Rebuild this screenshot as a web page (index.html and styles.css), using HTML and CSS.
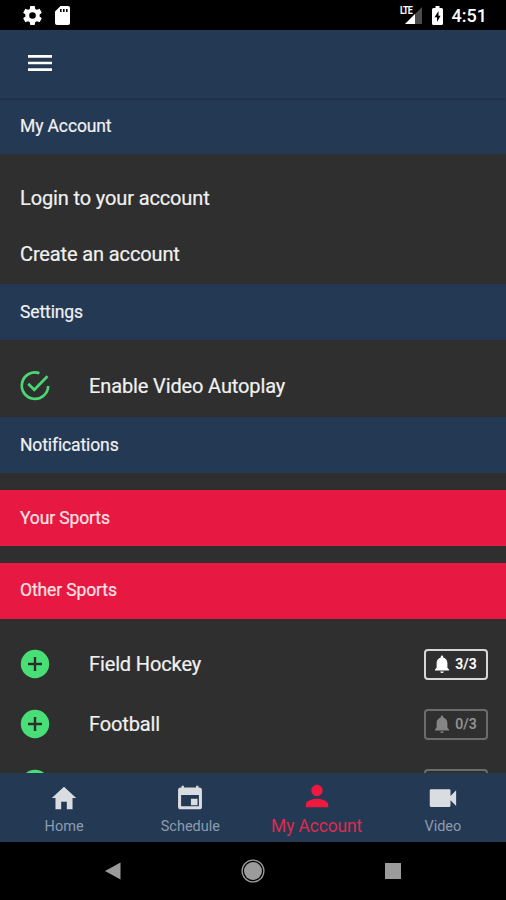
FILE: index.html
```html
<!DOCTYPE html>
<html lang="en">
<head>
    <meta charset="utf-8">
    <title>My Account</title>
    <link rel="stylesheet" href="styles.css">
</head>
<body>
    <!-- shared icons -->
    <svg class="sprite">
        <symbol id="plus" viewBox="0 0 30 30">
            <circle cx="15" cy="15" r="14.2" fill="#49df77"/>
            <path d="M8 15h14M15 8v14" stroke="#2c302d" stroke-width="2.4"/>
        </symbol>
        <symbol id="bell" viewBox="0 0 14 18">
            <path d="M7 18a1.8 1.8 0 0 0 1.8-1.6H5.2A1.8 1.8 0 0 0 7 18zm5.400-5.300V8c0-2.800-1.700-4.800-4.200-5.400V1.600a1.200 1.200 0 0 0-2.400 0v1C3.300 3.200 1.600 5.200 1.600 8v4.700L0 14.400v1h14v-1z"/>
        </symbol>
    </svg>

    <div class="status-bar">
        <svg class="gear" viewBox="2 2 20 20"><path d="M19.430 12.980c.04-.32.07-.64.07-.98s-.03-.66-.07-.98l2.110-1.650c.19-.15.24-.42.12-.64l-2-3.460c-.12-.22-.39-.3-.61-.22l-2.490 1c-.52-.4-1.080-.73-1.690-.98l-.38-2.650C14.460 2.180 14.250 2 14 2h-4c-.25 0-.46.18-.49.42l-.38 2.650c-.61.25-1.170.59-1.690.98l-2.490-1c-.23-.09-.49 0-.61.22l-2 3.460c-.13.22-.07.49.12.64l2.110 1.650c-.04.32-.07.65-.07.98s.03.66.07.98l-2.110 1.650c-.19.15-.24.42-.12.64l2 3.460c.12.22.39.3.61.22l2.490-1c.52.4 1.080.73 1.690.98l.38 2.650c.03.24.24.42.49.42h4c.25 0 .46-.18.49-.42l.38-2.650c.61-.25 1.170-.59 1.690-.98l2.490 1c.23.09.49 0 .61-.22l2-3.460c.12-.22.07-.49-.12-.64zM12 15.500A3.500 3.500 0 1 1 12 8.500a3.500 3.500 0 0 1 0 7z"/></svg>
        <svg class="sdcard" viewBox="0 0 15 19"><path fill-rule="evenodd" d="M5.500 0H13a2 2 0 0 1 2 2v15a2 2 0 0 1-2 2H2a2 2 0 0 1-2-2V5.500zM5 3v3h1.600V3zm3 0v3h1.600V3zm3 0v3h1.600V3z"/></svg>
        <span class="lte">LTE</span>
        <svg class="signal" viewBox="0 0 17 17"><path d="M17 0v17H0z" fill="#4b4b4b"/><path d="M10 7v10H0z"/></svg>
        <svg class="battery" viewBox="0 0 11 19"><path fill-rule="evenodd" d="M3.500 0h4v2H9.500A1.500 1.500 0 0 1 11 3.500v14A1.500 1.500 0 0 1 9.500 19h-8A1.500 1.500 0 0 1 0 17.500v-14A1.500 1.500 0 0 1 1.500 2h2zM6.500 5L2.500 11.200H5V16l3.600-6.300H6.500z"/></svg>
        <span class="clock">4:51</span>
    </div>

    <div class="toolbar">
        <svg class="menu" viewBox="0 0 24 16"><path d="M0 0h24v2.700H0zM0 6.650h24v2.700H0zM0 13.300h24V16H0z"/></svg>
    </div>

    <div class="content">
        <div class="header">My Account</div>
        <div class="links">
            <div class="link">Login to your account</div>
            <div class="link">Create an account</div>
        </div>
        <div class="header">Settings</div>
        <div class="row setting">
            <svg class="row-icon" viewBox="0 0 30 30" fill="none" stroke="#49d873" stroke-width="2.700">
                <path d="M19.400 2.200A13.200 13.200 0 1 0 28.200 15"/>
                <path d="M8.200 12.800L14.300 18.800 27.500 5.300"/>
            </svg>
            <span class="name">Enable Video Autoplay</span>
        </div>
        <div class="header">Notifications</div>
        <div class="header red">Your Sports</div>
        <div class="header red">Other Sports</div>
        <div class="sports">
            <div class="row">
                <svg class="row-icon"><use href="#plus"/></svg>
                <span class="name">Field Hockey</span>
                <span class="badge on"><svg class="bell"><use href="#bell"/></svg>3/3</span>
            </div>
            <div class="row">
                <svg class="row-icon"><use href="#plus"/></svg>
                <span class="name">Football</span>
                <span class="badge"><svg class="bell"><use href="#bell"/></svg>0/3</span>
            </div>
            <div class="row">
                <svg class="row-icon"><use href="#plus"/></svg>
                <span class="name"></span>
                <span class="badge"></span>
            </div>
        </div>
    </div>

    <div class="tabs">
        <div class="tab">
            <svg viewBox="0 0 512 512"><path d="M208 448V320h96v128h97.600V256H464L256 64 48 256h62.400v192z"/></svg>
            <span>Home</span>
        </div>
        <div class="tab">
            <svg viewBox="0 0 512 512"><path fill-rule="evenodd" d="M112 48h40v30h208V48h40v30h16c26 0 44 18 44 40v290c0 22-18 40-40 40H92c-22 0-40-18-40-40V118c0-22 18-40 44-40h16zM104 206v190h304V206zM272 268h112v110H272z"/></svg>
            <span>Schedule</span>
        </div>
        <div class="tab active">
            <svg viewBox="0 0 512 512"><path d="M256 256c52.800 0 96-43.200 96-96s-43.200-96-96-96-96 43.200-96 96 43.200 96 96 96zm0 48c-63.600 0-192 32.400-192 96v48h384v-48c0-63.600-128.400-96-192-96z"/></svg>
            <span>My Account</span>
        </div>
        <div class="tab">
            <svg viewBox="0 0 512 512"><path d="M384 220v-90c0-14-8-22-22-22H52c-14 0-22 8-22 22v256c0 14 8 22 22 22h310c14 0 22-8 22-22v-90l96 96V124z"/></svg>
            <span>Video</span>
        </div>
    </div>

    <div class="nav-bar">
        <svg viewBox="0 0 24 24"><path d="M4 12L19.500 3.500v17z"/></svg>
        <svg viewBox="0 0 24 24"><circle cx="12" cy="12" r="9"/><circle cx="12" cy="12" r="10.900" fill="none" stroke="#9b9b9b" stroke-width="1.300"/></svg>
        <svg viewBox="0 0 24 24"><path d="M4 4h16v16H4z"/></svg>
    </div>
</body>
</html>
```
FILE: styles.css
```css
* { box-sizing: border-box; }
body { margin: 0; height: 900px; display: flex; flex-direction: column; overflow: hidden; background: #2f2f2f; color: #f1f1f1; font-family: Roboto, "Liberation Sans", sans-serif; }
svg { display: block; flex: none; overflow: visible; }
.sprite { display: none; }

.status-bar { height: 30px; flex: none; display: flex; align-items: center; padding: 1px 19px 0 23px; background: #000; color: #fff; fill: #fff; }
.gear { width: 19px; height: 19px; }
.sdcard { width: 15px; height: 19px; margin-left: 13px; }
.lte { width: 11px; margin-left: auto; margin-right: -6px; margin-bottom: 9px; z-index: 1; font-size: 10.5px; line-height: 10px; font-weight: bold; letter-spacing: -1px; transform: scaleX(0.85); transform-origin: left; }
.signal { width: 17px; height: 17px; }
.battery { width: 11px; height: 19px; margin-left: 10px; }
.clock { margin-left: 9px; font-size: 18px; font-weight: 500; line-height: 30px; }

.toolbar { height: 68px; flex: none; display: flex; align-items: center; padding: 0 28px 2px; background: #243954; fill: #fff; box-shadow: 0 1px 3px rgba(0,0,0,0.25); z-index: 1; }
.menu { width: 24px; height: 16px; }

.content { flex: 1; min-height: 0; overflow: hidden; -webkit-text-stroke: 0.2px; }
.header { height: 56px; padding-left: 20px; line-height: 56px; font-size: 17.5px; letter-spacing: -0.12px; background: #243954; }
.red { height: 56px; margin-top: 17px; background: #e71943; color: #ffe3e5; }
.red + .red { line-height: 55px; }
.links { padding: 16px 0 2px; }
.link { height: 56px; padding-left: 20px; line-height: 56px; font-size: 20px; letter-spacing: -0.13px; }
.row { height: 60px; display: flex; align-items: center; padding: 0 18px 0 20px; }
.setting { height: 77px; padding-top: 14px; }
.row-icon { width: 30px; height: 30px; }
.name { margin-left: 39px; font-size: 20px; letter-spacing: -0.13px; }
.sports { padding-top: 15px; }
.badge { width: 64px; height: 31px; margin-left: auto; display: flex; align-items: center; justify-content: center; gap: 6px; border: 2px solid #6c6c6c; border-radius: 4px; color: #929292; fill: #858585; font-size: 14px; font-weight: 500; }
.badge.on { border-color: #d8d8d8; color: #fff; fill: #fff; }
.bell { width: 14px; height: 18px; }

.tabs { height: 69px; flex: none; display: flex; padding-left: 1px; background: #243954; color: #8d9caf; fill: #d9dce1; }
.tab { flex: 1; display: flex; flex-direction: column; align-items: center; padding-top: 10px; font-size: 14.5px; line-height: 20px; }
.tab svg { width: 30px; height: 30px; }
.tab span { margin-top: 4px; }
.active { padding-top: 8px; color: #df2b4d; fill: #ee193f; font-size: 17.5px; letter-spacing: -0.15px; }
.active span { margin-top: 5px; }

.nav-bar { height: 58px; flex: none; display: flex; align-items: center; justify-content: center; gap: 116px; background: #000; fill: #9b9b9b; }
.nav-bar svg { width: 24px; height: 24px; }
```
